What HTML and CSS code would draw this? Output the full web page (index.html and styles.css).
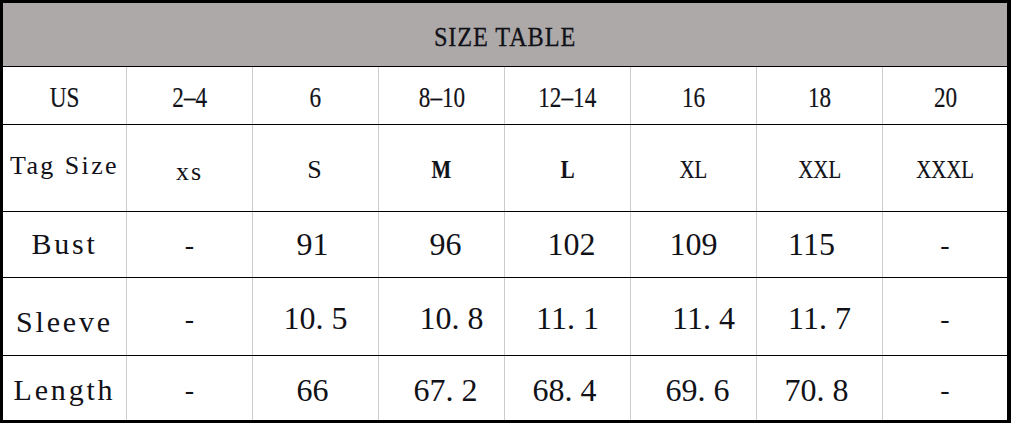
FILE: index.html
```html
<!DOCTYPE html>
<html>
<head>
<meta charset="utf-8">
<link rel="stylesheet" href="styles.css">
</head>
<body>
<div class="table">
  <div class="row head"><span class="title">SIZE TABLE</span></div>
  <div class="row r-us">
    <div class="cell"><span class="cond">US</span></div>
    <div class="cell"><span class="cond">2&#8211;4</span></div>
    <div class="cell"><span class="cond">6</span></div>
    <div class="cell"><span class="cond">8&#8211;10</span></div>
    <div class="cell"><span class="cond">12&#8211;14</span></div>
    <div class="cell"><span class="cond">16</span></div>
    <div class="cell"><span class="cond">18</span></div>
    <div class="cell"><span class="cond">20</span></div>
  </div>
  <div class="row r-tag">
    <div class="cell label-sm">Tag Size</div>
    <div class="cell thin low">xs</div>
    <div class="cell thin">S</div>
    <div class="cell"><span class="cond bold">M</span></div>
    <div class="cell"><span class="cond bold">L</span></div>
    <div class="cell"><span class="cond">XL</span></div>
    <div class="cell"><span class="cond">XXL</span></div>
    <div class="cell"><span class="cond">XXXL</span></div>
  </div>
  <div class="row r-bust">
    <div class="cell label">Bust</div>
    <div class="cell dash">-</div>
    <div class="cell val nudge-l">91</div>
    <div class="cell val nudge-r">96</div>
    <div class="cell val nudge-r">102</div>
    <div class="cell val">109</div>
    <div class="cell val shift-l">115</div>
    <div class="cell dash">-</div>
  </div>
  <div class="row r-sleeve">
    <div class="cell label">Sleeve</div>
    <div class="cell dash">-</div>
    <div class="cell val">10. 5</div>
    <div class="cell val shift-r">10. 8</div>
    <div class="cell val">11. 1</div>
    <div class="cell val shift-r">11. 4</div>
    <div class="cell val">11. 7</div>
    <div class="cell dash">-</div>
  </div>
  <div class="row r-length">
    <div class="cell label">Length</div>
    <div class="cell dash">-</div>
    <div class="cell val nudge-l">66</div>
    <div class="cell val nudge-r">67. 2</div>
    <div class="cell val nudge-l">68. 4</div>
    <div class="cell val nudge-r">69. 6</div>
    <div class="cell val nudge-l">70. 8</div>
    <div class="cell dash">-</div>
  </div>
</div>
</body>
</html>
```
FILE: styles.css
```css
html, body {
  margin: 0;
  padding: 0;
  background: #ffffff;
}

.table {
  width: 1011px;
  height: 423px;
  box-sizing: border-box;
  border-style: solid;
  border-color: #000000;
  border-width: 3px 4px 3px 3px;
  display: flex;
  flex-direction: column;
  font-family: "Liberation Serif", serif;
  color: #111118;
  background: #ffffff;
}

.row {
  display: flex;
  box-sizing: border-box;
  border-bottom: 1px solid #000000;
}

.row:last-child {
  border-bottom: none;
}

.head {
  height: 64px;
  background: #ada9a8;
  justify-content: center;
  align-items: center;
}

.title {
  display: inline-block;
  font-size: 27px;
  letter-spacing: 1px;
  transform: scaleX(0.9);
  padding-top: 6px;
  -webkit-text-stroke: 0.3px #111118;
}

.r-us { height: 58px; }
.r-tag { height: 87px; }
.r-bust { height: 66px; }
.r-sleeve { height: 78px; }
.r-length { height: 64px; }

.cell {
  width: 126px;
  box-sizing: border-box;
  border-right: 1px solid #cccccc;
  display: flex;
  align-items: center;
  justify-content: center;
  white-space: nowrap;
}

.cell:first-child { width: 124px; }
.cell:last-child { width: 124px; border-right: none; }

.cond {
  display: inline-block;
  font-size: 29px;
  transform: scaleX(0.8);
  -webkit-text-stroke: 0.2px #111118;
}

.r-us .cond { padding-top: 4px; }
.r-tag .cond { font-size: 26px; padding-top: 4px; }

.bold { font-weight: bold; }

.label-sm {
  font-size: 26px;
  letter-spacing: 2.4px;
  padding-bottom: 4px;
}

.thin {
  font-size: 26px;
  letter-spacing: 2px;
  padding-top: 4px;
}

.low { padding-top: 8px; }

.label {
  font-size: 30px;
  letter-spacing: 2.8px;
}

.val {
  font-size: 32px;
}

.dash {
  font-size: 28px;
}

.nudge-l { padding-right: 6px; }
.nudge-r { padding-left: 8px; }
.shift-l { padding-right: 16px; }
.shift-r { padding-left: 20px; }

.r-bust .label { padding-bottom: 2px; }
.r-sleeve .label { padding-top: 10px; }
.r-sleeve .val, .r-sleeve .dash { padding-top: 4px; }
.r-length .cell { padding-top: 4px; }
```
